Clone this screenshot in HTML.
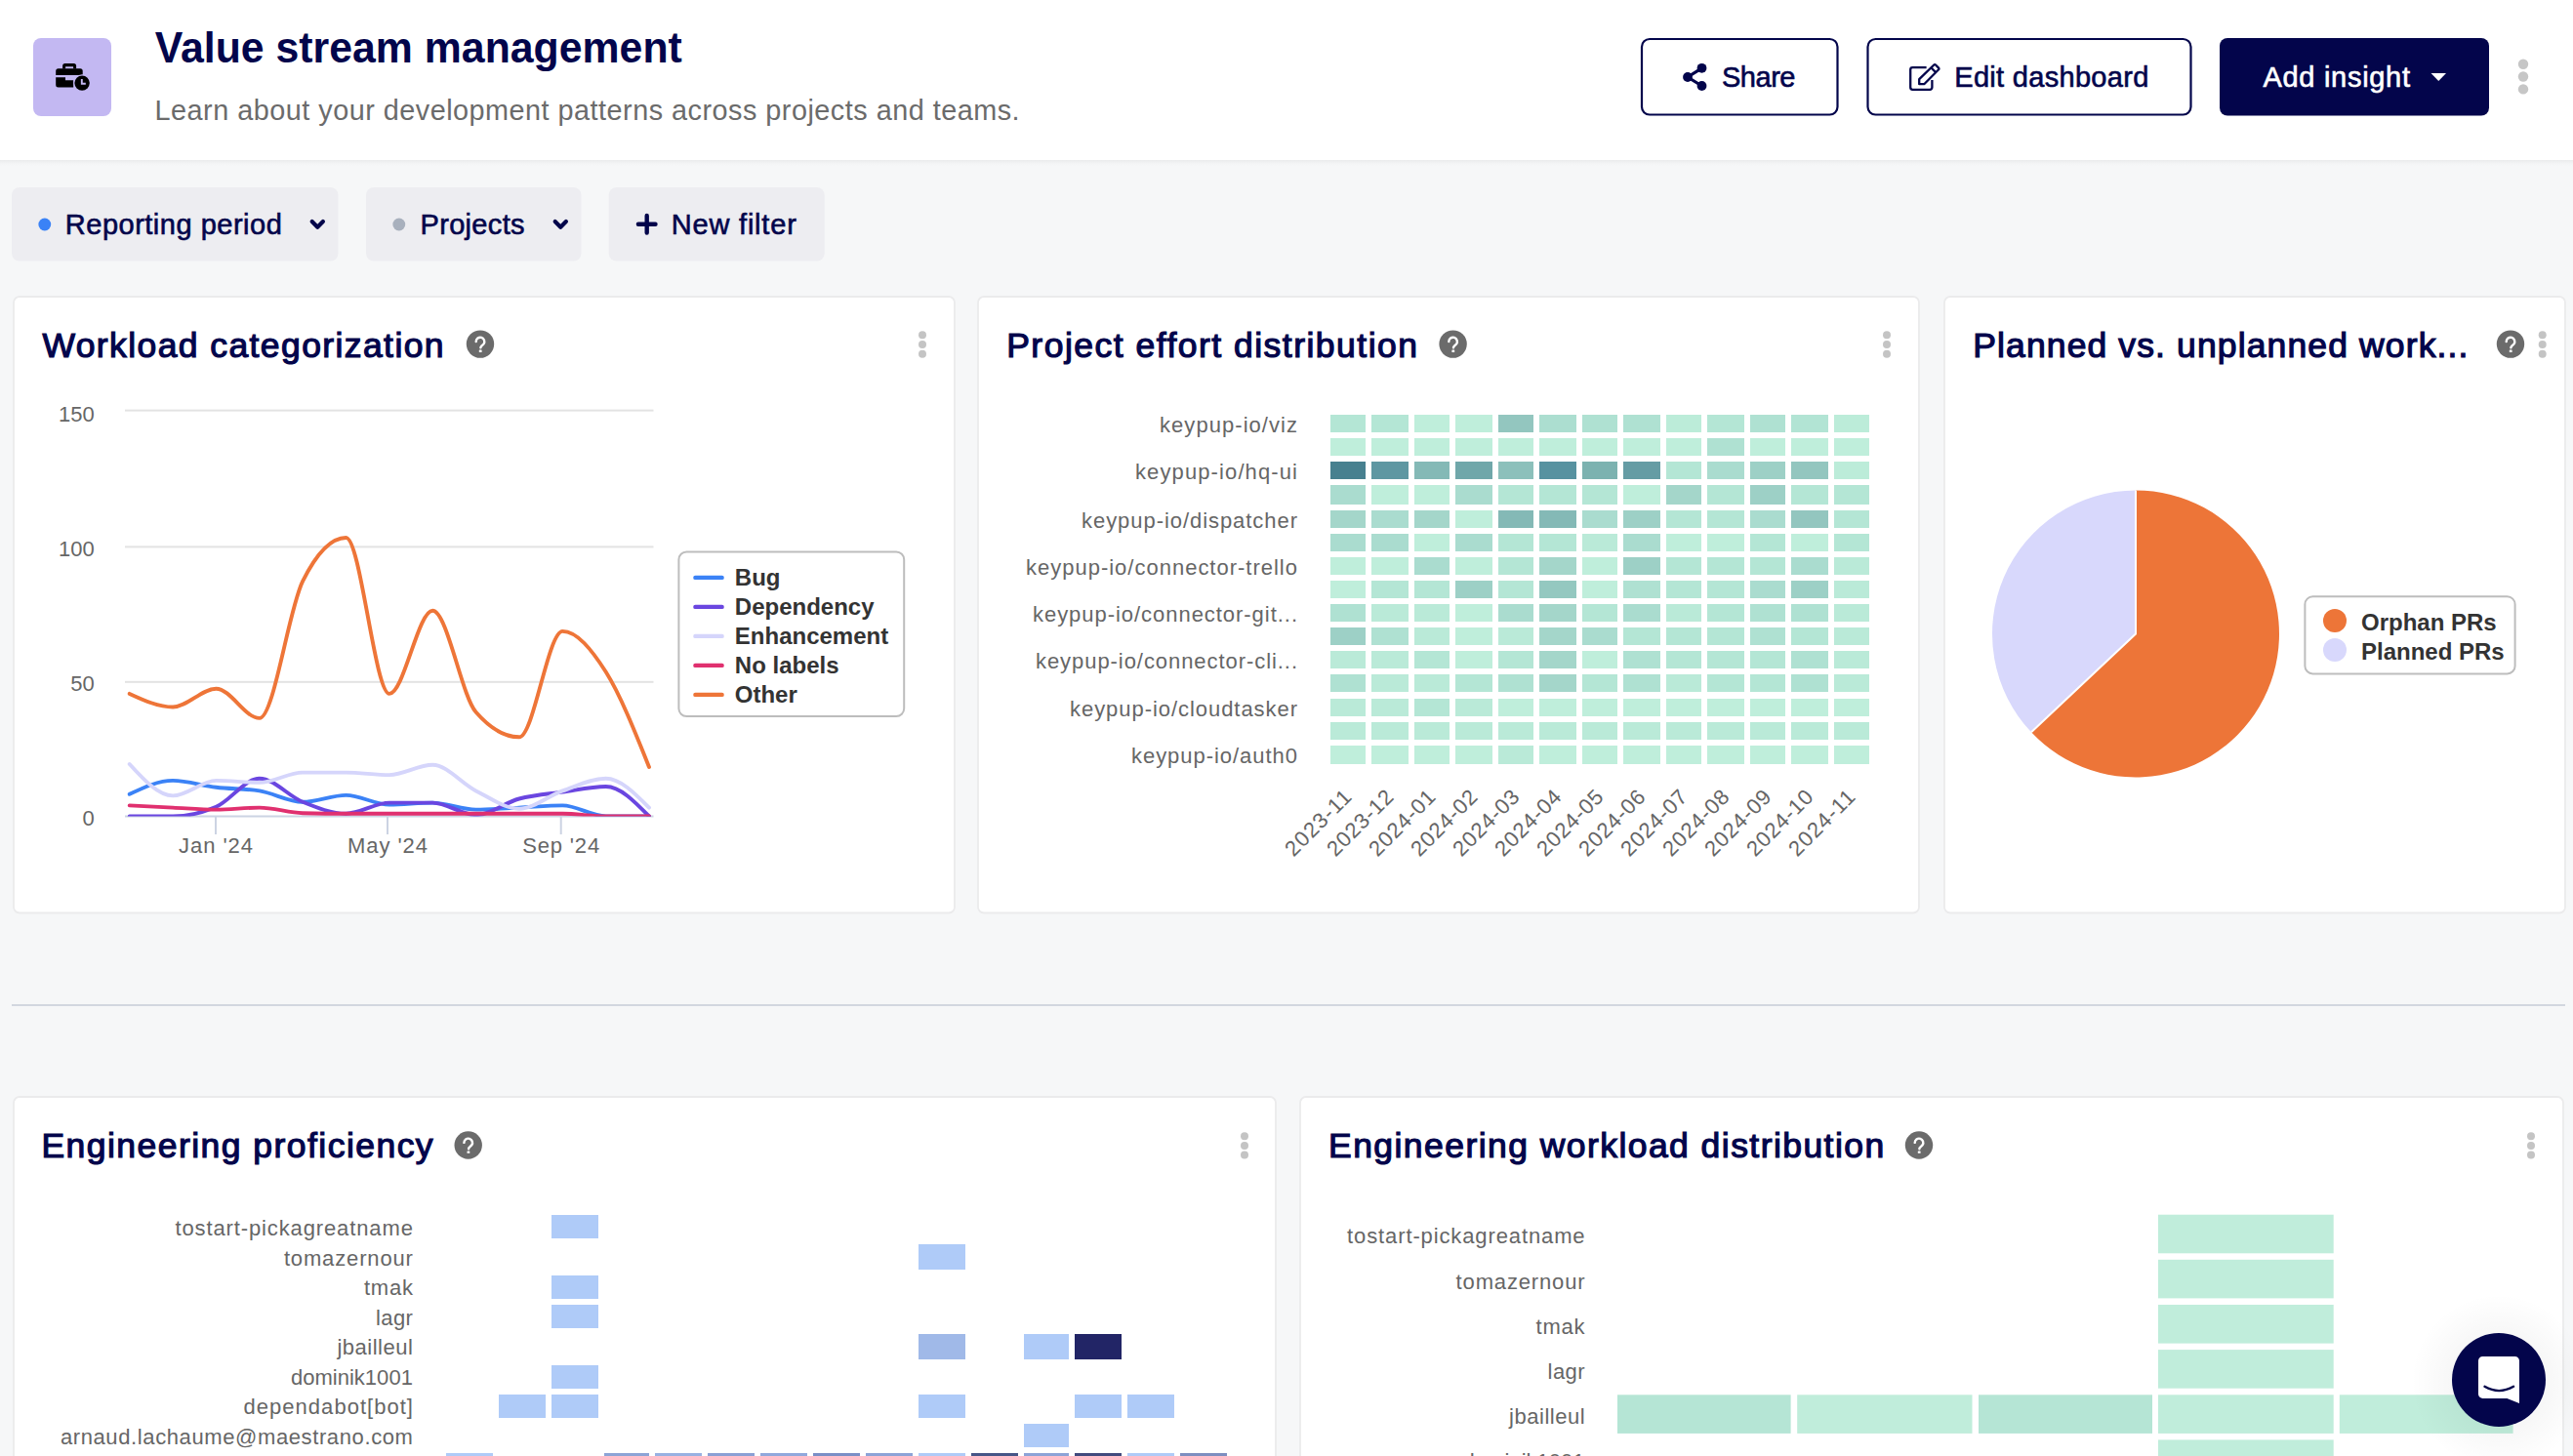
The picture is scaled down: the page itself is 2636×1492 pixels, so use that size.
<!DOCTYPE html>
<html><head><meta charset="utf-8"><title>Value stream management</title>
<style>
html,body{margin:0;padding:0;width:2636px;height:1492px;overflow:hidden;background:#f6f7f8;}
svg{display:block;font-family:"Liberation Sans", sans-serif;}
</style></head><body>
<svg width="2636" height="1492" viewBox="0 0 2636 1492">
<defs>
<linearGradient id="hsh" x1="0" y1="0" x2="0" y2="1">
<stop offset="0" stop-color="#e9eaeb"/><stop offset="1" stop-color="#f6f7f8" stop-opacity="0"/>
</linearGradient>
<radialGradient id="chatsh" cx="0.5" cy="0.5" r="0.5">
<stop offset="0.5" stop-color="#000" stop-opacity="0.035"/><stop offset="1" stop-color="#000" stop-opacity="0"/>
</radialGradient>
</defs>
<rect x="0" y="0" width="2636" height="1492" fill="#f6f7f8"/>

<rect x="0" y="164" width="2636" height="7" fill="url(#hsh)"/>
<rect x="0" y="0" width="2636" height="164" fill="#ffffff"/>
<rect x="34" y="39" width="80" height="80" rx="8" fill="#c3b8f2"/>
<g fill="#000"><path d="M66.6,65 h9 a2.5,2.5 0 0 1 2.5,2.5 v3 h-3 v-2.2 h-8 v2.2 h-3 v-3 a2.5,2.5 0 0 1 2.5,-2.5z"/><path d="M59.7,70.2 h22.5 a2.5,2.5 0 0 1 2.5,2.5 v4.3 h-27.5 v-4.3 a2.5,2.5 0 0 1 2.5,-2.5z"/><path d="M57.2,79.2 h9.8 v3.1 h8.2 v7.1 h-15.5 a2.5,2.5 0 0 1 -2.5,-2.5z"/></g><circle cx="84.1" cy="85.1" r="8.9" fill="#c3b8f2"/><circle cx="84.1" cy="85.1" r="7.7" fill="#000"/><path d="M83.8,81 v4.7 h4" stroke="#c3b8f2" stroke-width="1.9" fill="none"/>
<text x="158.8" y="64.3" font-size="44.8" font-weight="bold" fill="#03054b" textLength="540" lengthAdjust="spacingAndGlyphs">Value stream management</text>
<text x="158.6" y="122.8" font-size="28.8" fill="#6b6b6b" textLength="886" lengthAdjust="spacing">Learn about your development patterns across projects and teams.</text>
<rect x="1682" y="40" width="200.5" height="77.5" rx="8" fill="#fff" stroke="#03054b" stroke-width="2.2"/>
<g fill="#03054b" stroke="#03054b"><circle cx="1743.5" cy="69.8" r="4.9" stroke="none"/><circle cx="1729" cy="79" r="4.9" stroke="none"/><circle cx="1743.5" cy="88" r="4.9" stroke="none"/><path d="M1743.5,69.8 L1729,79 L1743.5,88" stroke-width="3.2" fill="none"/></g>
<text x="1764" y="88.7" font-size="29" stroke="#03054b" stroke-width="0.6" fill="#03054b" textLength="75.5" lengthAdjust="spacing">Share</text>
<rect x="1913.5" y="40" width="331" height="77.5" rx="8" fill="#fff" stroke="#03054b" stroke-width="2.2"/>
<g fill="none" stroke="#03054b" stroke-width="2.3" stroke-linejoin="round" stroke-linecap="butt"><path d="M1973.6,69.1 h-14.2 a2.2,2.2 0 0 0 -2.2,2.2 v18.3 a2.2,2.2 0 0 0 2.2,2.2 h17.8 a2.2,2.2 0 0 0 2.2,-2.2 v-7.6"/><path d="M1966.2,86.2 v-5.1 l15.1,-14.6 a1.2,1.2 0 0 1 1.7,0 l3.1,3.1 a1.2,1.2 0 0 1 0,1.7 l-14.6,14.7 z"/><path d="M1978.4,69.4 l4.6,4.6"/></g>
<text x="2002.3" y="88.7" font-size="29" stroke="#03054b" stroke-width="0.6" fill="#03054b" textLength="199" lengthAdjust="spacing">Edit dashboard</text>
<rect x="2274" y="39" width="276" height="79.5" rx="8" fill="#03054b"/>
<text x="2318.5" y="88.7" font-size="29" stroke="#fff" stroke-width="0.6" fill="#fff" textLength="150.5" lengthAdjust="spacing">Add insight</text>
<path d="M2490.5,75 h15.5 l-7.75,8z" fill="#fff"/>
<circle cx="2585" cy="65.8" r="5.2" fill="#c6c6c6"/>
<circle cx="2585" cy="78.5" r="5.2" fill="#c6c6c6"/>
<circle cx="2585" cy="91.4" r="5.2" fill="#c6c6c6"/>
<rect x="12" y="192" width="334.5" height="75.5" rx="8" fill="#ededf1"/>
<circle cx="45.8" cy="230" r="6.4" fill="#3a82f6"/>
<text x="66.8" y="239.6" font-size="29" stroke="#03054b" stroke-width="0.6" fill="#03054b" textLength="222" lengthAdjust="spacing">Reporting period</text>
<path d="M319.7,227.1 l5.6,5.6 l5.6,-5.6" fill="none" stroke="#03054b" stroke-width="4.2" stroke-linecap="round" stroke-linejoin="round"/>
<rect x="375" y="192" width="220.5" height="75.5" rx="8" fill="#ededf1"/>
<circle cx="408.8" cy="230" r="6.4" fill="#a8b0bd"/>
<text x="430.5" y="239.6" font-size="29" stroke="#03054b" stroke-width="0.6" fill="#03054b" textLength="107" lengthAdjust="spacing">Projects</text>
<path d="M568.6999999999999,227.1 l5.6,5.6 l5.6,-5.6" fill="none" stroke="#03054b" stroke-width="4.2" stroke-linecap="round" stroke-linejoin="round"/>
<rect x="623.7" y="192" width="221" height="75.5" rx="8" fill="#ededf1"/>
<path d="M662.7,221 v17.6 M653.9,229.8 h17.6" stroke="#03054b" stroke-width="4.4" stroke-linecap="round"/>
<text x="687.8" y="239.6" font-size="29" stroke="#03054b" stroke-width="0.6" fill="#03054b" textLength="128" lengthAdjust="spacing">New filter</text>
<rect x="14" y="304" width="964" height="631.5" rx="6" fill="#fff" stroke="#ebebec" stroke-width="1.8"/>
<rect x="1002" y="304" width="964" height="631.5" rx="6" fill="#fff" stroke="#ebebec" stroke-width="1.8"/>
<rect x="1992" y="304" width="636" height="631.5" rx="6" fill="#fff" stroke="#ebebec" stroke-width="1.8"/>
<text x="43.4" y="366.2" font-size="35.5" stroke="#03054b" stroke-width="1.2" fill="#03054b" textLength="411.2" lengthAdjust="spacing">Workload categorization</text>
<circle cx="492" cy="352.6" r="14.2" fill="#6b6b6b"/>
<g transform="translate(492,352.6)"><path d="M-4.3,-2.6 a4.3,4.3 0 1 1 7.9,2.4 c-0.9,1.2 -2.4,2 -2.9,2.9 q-0.3,0.5 -0.3,1" fill="none" stroke="#fff" stroke-width="2.4" stroke-linecap="round"/><rect x="-1.2" y="6.0" width="2.8" height="2.3" rx="0.5" fill="#fff"/></g>
<circle cx="945" cy="343.35" r="4" fill="#c4c4c4"/>
<circle cx="945" cy="353.00" r="4" fill="#c4c4c4"/>
<circle cx="945" cy="362.65" r="4" fill="#c4c4c4"/>
<text x="1031.2" y="366.2" font-size="35.5" stroke="#03054b" stroke-width="1.2" fill="#03054b" textLength="420.8" lengthAdjust="spacing">Project effort distribution</text>
<circle cx="1488.6" cy="352.6" r="14.2" fill="#6b6b6b"/>
<g transform="translate(1488.6,352.6)"><path d="M-4.3,-2.6 a4.3,4.3 0 1 1 7.9,2.4 c-0.9,1.2 -2.4,2 -2.9,2.9 q-0.3,0.5 -0.3,1" fill="none" stroke="#fff" stroke-width="2.4" stroke-linecap="round"/><rect x="-1.2" y="6.0" width="2.8" height="2.3" rx="0.5" fill="#fff"/></g>
<circle cx="1933" cy="343.35" r="4" fill="#c4c4c4"/>
<circle cx="1933" cy="353.00" r="4" fill="#c4c4c4"/>
<circle cx="1933" cy="362.65" r="4" fill="#c4c4c4"/>
<text x="2021.2" y="366.2" font-size="35.5" stroke="#03054b" stroke-width="1.2" fill="#03054b" textLength="507.2" lengthAdjust="spacing">Planned vs. unplanned work...</text>
<circle cx="2572" cy="352.6" r="14.2" fill="#6b6b6b"/>
<g transform="translate(2572,352.6)"><path d="M-4.3,-2.6 a4.3,4.3 0 1 1 7.9,2.4 c-0.9,1.2 -2.4,2 -2.9,2.9 q-0.3,0.5 -0.3,1" fill="none" stroke="#fff" stroke-width="2.4" stroke-linecap="round"/><rect x="-1.2" y="6.0" width="2.8" height="2.3" rx="0.5" fill="#fff"/></g>
<circle cx="2604.7" cy="343.35" r="4" fill="#c4c4c4"/>
<circle cx="2604.7" cy="353.00" r="4" fill="#c4c4c4"/>
<circle cx="2604.7" cy="362.65" r="4" fill="#c4c4c4"/>
<rect x="12" y="1029" width="2616" height="2" fill="#d2d7df"/>
<rect x="14" y="1124" width="1293" height="475" rx="6" fill="#fff" stroke="#ebebec" stroke-width="1.8"/>
<rect x="1332" y="1124" width="1294" height="475" rx="6" fill="#fff" stroke="#ebebec" stroke-width="1.8"/>
<text x="42.4" y="1185.5" font-size="35.5" stroke="#03054b" stroke-width="1.2" fill="#03054b" textLength="401.2" lengthAdjust="spacing">Engineering proficiency</text>
<circle cx="479.7" cy="1173.5" r="14.2" fill="#6b6b6b"/>
<g transform="translate(479.7,1173.5)"><path d="M-4.3,-2.6 a4.3,4.3 0 1 1 7.9,2.4 c-0.9,1.2 -2.4,2 -2.9,2.9 q-0.3,0.5 -0.3,1" fill="none" stroke="#fff" stroke-width="2.4" stroke-linecap="round"/><rect x="-1.2" y="6.0" width="2.8" height="2.3" rx="0.5" fill="#fff"/></g>
<circle cx="1275" cy="1164.25" r="4" fill="#c4c4c4"/>
<circle cx="1275" cy="1173.90" r="4" fill="#c4c4c4"/>
<circle cx="1275" cy="1183.55" r="4" fill="#c4c4c4"/>
<text x="1361.0" y="1185.5" font-size="35.5" stroke="#03054b" stroke-width="1.2" fill="#03054b" textLength="569.2" lengthAdjust="spacing">Engineering workload distribution</text>
<circle cx="1966" cy="1173.5" r="14.2" fill="#6b6b6b"/>
<g transform="translate(1966,1173.5)"><path d="M-4.3,-2.6 a4.3,4.3 0 1 1 7.9,2.4 c-0.9,1.2 -2.4,2 -2.9,2.9 q-0.3,0.5 -0.3,1" fill="none" stroke="#fff" stroke-width="2.4" stroke-linecap="round"/><rect x="-1.2" y="6.0" width="2.8" height="2.3" rx="0.5" fill="#fff"/></g>
<circle cx="2593" cy="1164.25" r="4" fill="#c4c4c4"/>
<circle cx="2593" cy="1173.90" r="4" fill="#c4c4c4"/>
<circle cx="2593" cy="1183.55" r="4" fill="#c4c4c4"/>
<rect x="128" y="419.6" width="541.5" height="2" fill="#e3e3e3"/>
<rect x="128" y="559.4" width="541.5" height="2" fill="#e3e3e3"/>
<rect x="128" y="697.8" width="541.5" height="2" fill="#e3e3e3"/>
<text x="96.7" y="432.1" font-size="22" fill="#666666" text-anchor="end">150</text>
<text x="96.7" y="569.9" font-size="22" fill="#666666" text-anchor="end">100</text>
<text x="96.7" y="708.3" font-size="22" fill="#666666" text-anchor="end">50</text>
<text x="96.7" y="846.0" font-size="22" fill="#666666" text-anchor="end">0</text>
<rect x="128" y="835.5" width="541.5" height="2" fill="#ccd3e3"/>
<rect x="220" y="836.5" width="2" height="18.5" fill="#ccd3e3"/>
<rect x="396" y="836.5" width="2" height="18.5" fill="#ccd3e3"/>
<rect x="573.7" y="836.5" width="2" height="18.5" fill="#ccd3e3"/>
<text x="183.0" y="874" font-size="22" fill="#666666" textLength="76" lengthAdjust="spacing">Jan '24</text>
<text x="356.0" y="874" font-size="22" fill="#666666" textLength="82" lengthAdjust="spacing">May '24</text>
<text x="535.2" y="874" font-size="22" fill="#666666" textLength="79" lengthAdjust="spacing">Sep '24</text>
<clipPath id="plotclip"><rect x="110" y="380" width="580" height="456.5"/></clipPath><g clip-path="url(#plotclip)">
<path d="M132.7,813.8C147.5,806.8 162.3,799.9 177.1,799.9C191.8,799.9 206.6,805.1 221.4,806.8C236.2,808.6 251.0,808.0 265.8,810.4C280.6,812.8 295.4,821.8 310.1,821.8C324.9,821.8 339.7,814.9 354.5,814.9C369.3,814.9 384.1,824.6 398.9,824.6C413.6,824.6 428.4,822.6 443.2,822.6C458.0,822.6 472.8,829.6 487.6,829.6C502.4,829.6 517.2,828.3 531.9,827.6C546.7,826.9 561.5,825.4 576.3,825.4C591.1,825.4 605.9,836.5 620.7,836.5C635.4,836.5 650.2,836.5 665.0,836.5" fill="none" stroke="#3b82f6" stroke-width="3.9" stroke-linejoin="round" stroke-linecap="round"/>
<path d="M132.7,836.5C147.5,836.5 162.3,836.5 177.1,836.5C191.8,836.5 206.6,833.3 221.4,826.8C236.2,820.3 251.0,797.7 265.8,797.7C280.6,797.7 295.4,815.8 310.1,821.8C324.9,827.8 339.7,833.7 354.5,833.7C369.3,833.7 384.1,822.6 398.9,822.6C413.6,822.6 428.4,822.6 443.2,822.6C458.0,822.6 472.8,835.1 487.6,835.1C502.4,835.1 517.2,822.4 531.9,818.5C546.7,814.6 561.5,813.6 576.3,811.6C591.1,809.5 605.9,806.0 620.7,806.0C635.4,806.0 650.2,821.3 665.0,836.5" fill="none" stroke="#6a46e0" stroke-width="3.9" stroke-linejoin="round" stroke-linecap="round"/>
<path d="M132.7,783.0C147.5,799.2 162.3,815.4 177.1,815.4C191.8,815.4 206.6,799.9 221.4,799.9C236.2,799.9 251.0,801.9 265.8,801.9C280.6,801.9 295.4,791.6 310.1,791.6C324.9,791.6 339.7,791.6 354.5,791.6C369.3,791.6 384.1,794.1 398.9,794.1C413.6,794.1 428.4,783.8 443.2,783.8C458.0,783.8 472.8,803.0 487.6,810.4C502.4,817.9 517.2,828.7 531.9,828.7C546.7,828.7 561.5,815.6 576.3,810.4C591.1,805.3 605.9,797.7 620.7,797.7C635.4,797.7 650.2,812.7 665.0,827.6" fill="none" stroke="#d5d5fb" stroke-width="3.9" stroke-linejoin="round" stroke-linecap="round"/>
<path d="M132.7,825.4C147.5,826.2 162.3,826.9 177.1,827.6C191.8,828.3 206.6,829.6 221.4,829.6C236.2,829.6 251.0,827.6 265.8,827.6C280.6,827.6 295.4,832.8 310.1,833.2C324.9,833.5 339.7,833.7 354.5,833.7C369.3,833.7 384.1,833.7 398.9,833.7C413.6,833.7 428.4,833.7 443.2,833.7C458.0,833.7 472.8,833.7 487.6,833.7C502.4,833.7 517.2,833.7 531.9,833.7C546.7,833.7 561.5,833.7 576.3,833.7C591.1,833.7 605.9,836.5 620.7,836.5C635.4,836.5 650.2,836.5 665.0,836.5" fill="none" stroke="#e0306f" stroke-width="3.9" stroke-linejoin="round" stroke-linecap="round"/>
<path d="M132.7,710.9C147.5,717.7 162.3,724.5 177.1,724.5C191.8,724.5 206.6,705.7 221.4,705.7C236.2,705.7 251.0,735.9 265.8,735.9C280.6,735.9 295.4,625.4 310.1,595.6C324.9,565.9 339.7,551.0 354.5,551.0C369.3,551.0 384.1,710.9 398.9,710.9C413.6,710.9 428.4,625.8 443.2,625.8C458.0,625.8 472.8,712.8 487.6,729.8C502.4,746.8 517.2,755.3 531.9,755.3C546.7,755.3 561.5,646.9 576.3,646.9C591.1,646.9 605.9,665.3 620.7,688.5C635.4,711.7 650.2,748.9 665.0,786.0" fill="none" stroke="#ee7538" stroke-width="3.9" stroke-linejoin="round" stroke-linecap="round"/>
</g>
<rect x="695.4" y="565.4" width="230.8" height="168.7" rx="8" fill="#fff" stroke="#bdbdbd" stroke-width="2"/>
<rect x="710.2" y="589.6999999999999" width="31.6" height="4.4" rx="2.2" fill="#3b82f6"/>
<text x="752.8" y="600.1" font-size="24" font-weight="bold" fill="#333">Bug</text>
<rect x="710.2" y="619.6999999999999" width="31.6" height="4.4" rx="2.2" fill="#6a46e0"/>
<text x="752.8" y="630.1" font-size="24" font-weight="bold" fill="#333">Dependency</text>
<rect x="710.2" y="649.6999999999999" width="31.6" height="4.4" rx="2.2" fill="#d5d5fb"/>
<text x="752.8" y="660.1" font-size="24" font-weight="bold" fill="#333">Enhancement</text>
<rect x="710.2" y="679.6999999999999" width="31.6" height="4.4" rx="2.2" fill="#e0306f"/>
<text x="752.8" y="690.1" font-size="24" font-weight="bold" fill="#333">No labels</text>
<rect x="710.2" y="709.6999999999999" width="31.6" height="4.4" rx="2.2" fill="#ee7538"/>
<text x="752.8" y="720.1" font-size="24" font-weight="bold" fill="#333">Other</text>
<rect x="1363" y="425" width="36" height="18" fill="#b4e6d5"/>
<rect x="1405" y="425" width="38" height="18" fill="#b4e6d5"/>
<rect x="1449" y="425" width="36" height="18" fill="#bfeedb"/>
<rect x="1491" y="425" width="38" height="18" fill="#bfeedb"/>
<rect x="1535" y="425" width="36" height="18" fill="#93c6bf"/>
<rect x="1577" y="425" width="38" height="18" fill="#acded0"/>
<rect x="1621" y="425" width="36" height="18" fill="#afe1d2"/>
<rect x="1663" y="425" width="38" height="18" fill="#afe1d2"/>
<rect x="1707" y="425" width="36" height="18" fill="#bcecd9"/>
<rect x="1749" y="425" width="38" height="18" fill="#b4e6d5"/>
<rect x="1793" y="425" width="36" height="18" fill="#afe1d2"/>
<rect x="1835" y="425" width="38" height="18" fill="#b2e4d4"/>
<rect x="1879" y="425" width="36" height="18" fill="#bcecd9"/>
<rect x="1363" y="449" width="36" height="18" fill="#bfeedb"/>
<rect x="1405" y="449" width="38" height="18" fill="#bfeedb"/>
<rect x="1449" y="449" width="36" height="18" fill="#bfeedb"/>
<rect x="1491" y="449" width="38" height="18" fill="#bfeedb"/>
<rect x="1535" y="449" width="36" height="18" fill="#bfeedb"/>
<rect x="1577" y="449" width="38" height="18" fill="#bfeedb"/>
<rect x="1621" y="449" width="36" height="18" fill="#bfeedb"/>
<rect x="1663" y="449" width="38" height="18" fill="#bfeedb"/>
<rect x="1707" y="449" width="36" height="18" fill="#bfeedb"/>
<rect x="1749" y="449" width="38" height="18" fill="#afe1d2"/>
<rect x="1793" y="449" width="36" height="18" fill="#bfeedb"/>
<rect x="1835" y="449" width="38" height="18" fill="#bfeedb"/>
<rect x="1879" y="449" width="36" height="18" fill="#bfeedb"/>
<rect x="1363" y="473" width="36" height="18" fill="#47808f"/>
<rect x="1405" y="473" width="38" height="18" fill="#5e97a2"/>
<rect x="1449" y="473" width="36" height="18" fill="#84b9b6"/>
<rect x="1491" y="473" width="38" height="18" fill="#70a7aa"/>
<rect x="1535" y="473" width="36" height="18" fill="#8cc0bb"/>
<rect x="1577" y="473" width="38" height="18" fill="#5792a0"/>
<rect x="1621" y="473" width="36" height="18" fill="#7cb2b0"/>
<rect x="1663" y="473" width="38" height="18" fill="#659ca4"/>
<rect x="1707" y="473" width="36" height="18" fill="#b4e6d5"/>
<rect x="1749" y="473" width="38" height="18" fill="#aadccf"/>
<rect x="1793" y="473" width="36" height="18" fill="#9dd0c6"/>
<rect x="1835" y="473" width="38" height="18" fill="#93c6bf"/>
<rect x="1879" y="473" width="36" height="18" fill="#bcecd9"/>
<rect x="1363" y="497" width="36" height="20" fill="#aadccf"/>
<rect x="1405" y="497" width="38" height="20" fill="#bfeedb"/>
<rect x="1449" y="497" width="36" height="20" fill="#bfeedb"/>
<rect x="1491" y="497" width="38" height="20" fill="#aadccf"/>
<rect x="1535" y="497" width="36" height="20" fill="#b4e6d5"/>
<rect x="1577" y="497" width="38" height="20" fill="#b4e6d5"/>
<rect x="1621" y="497" width="36" height="20" fill="#b4e6d5"/>
<rect x="1663" y="497" width="38" height="20" fill="#bfeedb"/>
<rect x="1707" y="497" width="36" height="20" fill="#a4d6ca"/>
<rect x="1749" y="497" width="38" height="20" fill="#b4e6d5"/>
<rect x="1793" y="497" width="36" height="20" fill="#9dd0c6"/>
<rect x="1835" y="497" width="38" height="20" fill="#b4e6d5"/>
<rect x="1879" y="497" width="36" height="20" fill="#b4e6d5"/>
<rect x="1363" y="523" width="36" height="18" fill="#a4d6ca"/>
<rect x="1405" y="523" width="38" height="18" fill="#aadccf"/>
<rect x="1449" y="523" width="36" height="18" fill="#a4d6ca"/>
<rect x="1491" y="523" width="38" height="18" fill="#bfeedb"/>
<rect x="1535" y="523" width="36" height="18" fill="#84b9b6"/>
<rect x="1577" y="523" width="38" height="18" fill="#84b9b6"/>
<rect x="1621" y="523" width="36" height="18" fill="#aadccf"/>
<rect x="1663" y="523" width="38" height="18" fill="#9dd0c6"/>
<rect x="1707" y="523" width="36" height="18" fill="#b4e6d5"/>
<rect x="1749" y="523" width="38" height="18" fill="#b4e6d5"/>
<rect x="1793" y="523" width="36" height="18" fill="#aadccf"/>
<rect x="1835" y="523" width="38" height="18" fill="#93c6bf"/>
<rect x="1879" y="523" width="36" height="18" fill="#b4e6d5"/>
<rect x="1363" y="547" width="36" height="18" fill="#aadccf"/>
<rect x="1405" y="547" width="38" height="18" fill="#aadccf"/>
<rect x="1449" y="547" width="36" height="18" fill="#bfeedb"/>
<rect x="1491" y="547" width="38" height="18" fill="#aadccf"/>
<rect x="1535" y="547" width="36" height="18" fill="#b4e6d5"/>
<rect x="1577" y="547" width="38" height="18" fill="#b4e6d5"/>
<rect x="1621" y="547" width="36" height="18" fill="#baead8"/>
<rect x="1663" y="547" width="38" height="18" fill="#aadccf"/>
<rect x="1707" y="547" width="36" height="18" fill="#bfeedb"/>
<rect x="1749" y="547" width="38" height="18" fill="#bfeedb"/>
<rect x="1793" y="547" width="36" height="18" fill="#b4e6d5"/>
<rect x="1835" y="547" width="38" height="18" fill="#bfeedb"/>
<rect x="1879" y="547" width="36" height="18" fill="#b4e6d5"/>
<rect x="1363" y="571" width="36" height="18" fill="#bfeedb"/>
<rect x="1405" y="571" width="38" height="18" fill="#bfeedb"/>
<rect x="1449" y="571" width="36" height="18" fill="#aadccf"/>
<rect x="1491" y="571" width="38" height="18" fill="#bfeedb"/>
<rect x="1535" y="571" width="36" height="18" fill="#b4e6d5"/>
<rect x="1577" y="571" width="38" height="18" fill="#a4d6ca"/>
<rect x="1621" y="571" width="36" height="18" fill="#bfeedb"/>
<rect x="1663" y="571" width="38" height="18" fill="#9dd0c6"/>
<rect x="1707" y="571" width="36" height="18" fill="#b4e6d5"/>
<rect x="1749" y="571" width="38" height="18" fill="#b4e6d5"/>
<rect x="1793" y="571" width="36" height="18" fill="#b4e6d5"/>
<rect x="1835" y="571" width="38" height="18" fill="#aadccf"/>
<rect x="1879" y="571" width="36" height="18" fill="#baead8"/>
<rect x="1363" y="595" width="36" height="18" fill="#bfeedb"/>
<rect x="1405" y="595" width="38" height="18" fill="#b4e6d5"/>
<rect x="1449" y="595" width="36" height="18" fill="#b4e6d5"/>
<rect x="1491" y="595" width="38" height="18" fill="#9dd0c6"/>
<rect x="1535" y="595" width="36" height="18" fill="#b4e6d5"/>
<rect x="1577" y="595" width="38" height="18" fill="#94c8c0"/>
<rect x="1621" y="595" width="36" height="18" fill="#bfeedb"/>
<rect x="1663" y="595" width="38" height="18" fill="#afe1d2"/>
<rect x="1707" y="595" width="36" height="18" fill="#b4e6d5"/>
<rect x="1749" y="595" width="38" height="18" fill="#b4e6d5"/>
<rect x="1793" y="595" width="36" height="18" fill="#aadccf"/>
<rect x="1835" y="595" width="38" height="18" fill="#9dd0c6"/>
<rect x="1879" y="595" width="36" height="18" fill="#baead8"/>
<rect x="1363" y="619" width="36" height="18" fill="#afe1d2"/>
<rect x="1405" y="619" width="38" height="18" fill="#baead8"/>
<rect x="1449" y="619" width="36" height="18" fill="#baead8"/>
<rect x="1491" y="619" width="38" height="18" fill="#bfeedb"/>
<rect x="1535" y="619" width="36" height="18" fill="#aadccf"/>
<rect x="1577" y="619" width="38" height="18" fill="#a4d6ca"/>
<rect x="1621" y="619" width="36" height="18" fill="#b4e6d5"/>
<rect x="1663" y="619" width="38" height="18" fill="#aadccf"/>
<rect x="1707" y="619" width="36" height="18" fill="#baead8"/>
<rect x="1749" y="619" width="38" height="18" fill="#b4e6d5"/>
<rect x="1793" y="619" width="36" height="18" fill="#afe1d2"/>
<rect x="1835" y="619" width="38" height="18" fill="#afe1d2"/>
<rect x="1879" y="619" width="36" height="18" fill="#baead8"/>
<rect x="1363" y="643" width="36" height="18" fill="#9dd0c6"/>
<rect x="1405" y="643" width="38" height="18" fill="#afe1d2"/>
<rect x="1449" y="643" width="36" height="18" fill="#baead8"/>
<rect x="1491" y="643" width="38" height="18" fill="#bfeedb"/>
<rect x="1535" y="643" width="36" height="18" fill="#baead8"/>
<rect x="1577" y="643" width="38" height="18" fill="#a4d6ca"/>
<rect x="1621" y="643" width="36" height="18" fill="#aadccf"/>
<rect x="1663" y="643" width="38" height="18" fill="#b4e6d5"/>
<rect x="1707" y="643" width="36" height="18" fill="#b4e6d5"/>
<rect x="1749" y="643" width="38" height="18" fill="#b4e6d5"/>
<rect x="1793" y="643" width="36" height="18" fill="#afe1d2"/>
<rect x="1835" y="643" width="38" height="18" fill="#b4e6d5"/>
<rect x="1879" y="643" width="36" height="18" fill="#baead8"/>
<rect x="1363" y="667" width="36" height="18" fill="#baead8"/>
<rect x="1405" y="667" width="38" height="18" fill="#baead8"/>
<rect x="1449" y="667" width="36" height="18" fill="#b4e6d5"/>
<rect x="1491" y="667" width="38" height="18" fill="#bfeedb"/>
<rect x="1535" y="667" width="36" height="18" fill="#b4e6d5"/>
<rect x="1577" y="667" width="38" height="18" fill="#a4d6ca"/>
<rect x="1621" y="667" width="36" height="18" fill="#bfeedb"/>
<rect x="1663" y="667" width="38" height="18" fill="#afe1d2"/>
<rect x="1707" y="667" width="36" height="18" fill="#b4e6d5"/>
<rect x="1749" y="667" width="38" height="18" fill="#b4e6d5"/>
<rect x="1793" y="667" width="36" height="18" fill="#b4e6d5"/>
<rect x="1835" y="667" width="38" height="18" fill="#afe1d2"/>
<rect x="1879" y="667" width="36" height="18" fill="#baead8"/>
<rect x="1363" y="691" width="36" height="18" fill="#afe1d2"/>
<rect x="1405" y="691" width="38" height="18" fill="#baead8"/>
<rect x="1449" y="691" width="36" height="18" fill="#baead8"/>
<rect x="1491" y="691" width="38" height="18" fill="#b4e6d5"/>
<rect x="1535" y="691" width="36" height="18" fill="#afe1d2"/>
<rect x="1577" y="691" width="38" height="18" fill="#a4d6ca"/>
<rect x="1621" y="691" width="36" height="18" fill="#b4e6d5"/>
<rect x="1663" y="691" width="38" height="18" fill="#afe1d2"/>
<rect x="1707" y="691" width="36" height="18" fill="#baead8"/>
<rect x="1749" y="691" width="38" height="18" fill="#b4e6d5"/>
<rect x="1793" y="691" width="36" height="18" fill="#b4e6d5"/>
<rect x="1835" y="691" width="38" height="18" fill="#afe1d2"/>
<rect x="1879" y="691" width="36" height="18" fill="#baead8"/>
<rect x="1363" y="716" width="36" height="18" fill="#baead8"/>
<rect x="1405" y="716" width="38" height="18" fill="#baead8"/>
<rect x="1449" y="716" width="36" height="18" fill="#b4e6d5"/>
<rect x="1491" y="716" width="38" height="18" fill="#baead8"/>
<rect x="1535" y="716" width="36" height="18" fill="#bfeedb"/>
<rect x="1577" y="716" width="38" height="18" fill="#bfeedb"/>
<rect x="1621" y="716" width="36" height="18" fill="#bfeedb"/>
<rect x="1663" y="716" width="38" height="18" fill="#bfeedb"/>
<rect x="1707" y="716" width="36" height="18" fill="#bfeedb"/>
<rect x="1749" y="716" width="38" height="18" fill="#bfeedb"/>
<rect x="1793" y="716" width="36" height="18" fill="#bfeedb"/>
<rect x="1835" y="716" width="38" height="18" fill="#bfeedb"/>
<rect x="1879" y="716" width="36" height="18" fill="#bfeedb"/>
<rect x="1363" y="740" width="36" height="18" fill="#baead8"/>
<rect x="1405" y="740" width="38" height="18" fill="#baead8"/>
<rect x="1449" y="740" width="36" height="18" fill="#baead8"/>
<rect x="1491" y="740" width="38" height="18" fill="#baead8"/>
<rect x="1535" y="740" width="36" height="18" fill="#baead8"/>
<rect x="1577" y="740" width="38" height="18" fill="#baead8"/>
<rect x="1621" y="740" width="36" height="18" fill="#baead8"/>
<rect x="1663" y="740" width="38" height="18" fill="#baead8"/>
<rect x="1707" y="740" width="36" height="18" fill="#baead8"/>
<rect x="1749" y="740" width="38" height="18" fill="#baead8"/>
<rect x="1793" y="740" width="36" height="18" fill="#baead8"/>
<rect x="1835" y="740" width="38" height="18" fill="#baead8"/>
<rect x="1879" y="740" width="36" height="18" fill="#baead8"/>
<rect x="1363" y="764" width="36" height="19" fill="#bfeedb"/>
<rect x="1405" y="764" width="38" height="19" fill="#bfeedb"/>
<rect x="1449" y="764" width="36" height="19" fill="#bfeedb"/>
<rect x="1491" y="764" width="38" height="19" fill="#bfeedb"/>
<rect x="1535" y="764" width="36" height="19" fill="#baead8"/>
<rect x="1577" y="764" width="38" height="19" fill="#bfeedb"/>
<rect x="1621" y="764" width="36" height="19" fill="#bfeedb"/>
<rect x="1663" y="764" width="38" height="19" fill="#bfeedb"/>
<rect x="1707" y="764" width="36" height="19" fill="#bfeedb"/>
<rect x="1749" y="764" width="38" height="19" fill="#bfeedb"/>
<rect x="1793" y="764" width="36" height="19" fill="#bfeedb"/>
<rect x="1835" y="764" width="38" height="19" fill="#bfeedb"/>
<rect x="1879" y="764" width="36" height="19" fill="#bfeedb"/>
<text x="1188" y="443.2" font-size="22" fill="#666666" textLength="141" lengthAdjust="spacing">keypup-io/viz</text>
<text x="1163" y="491.2" font-size="22" fill="#666666" textLength="166" lengthAdjust="spacing">keypup-io/hq-ui</text>
<text x="1108" y="541.2" font-size="22" fill="#666666" textLength="221" lengthAdjust="spacing">keypup-io/dispatcher</text>
<text x="1051" y="589.2" font-size="22" fill="#666666" textLength="278" lengthAdjust="spacing">keypup-io/connector-trello</text>
<text x="1058" y="637.2" font-size="22" fill="#666666" textLength="271" lengthAdjust="spacing">keypup-io/connector-git...</text>
<text x="1061" y="685.2" font-size="22" fill="#666666" textLength="268" lengthAdjust="spacing">keypup-io/connector-cli...</text>
<text x="1096" y="734.2" font-size="22" fill="#666666" textLength="233" lengthAdjust="spacing">keypup-io/cloudtasker</text>
<text x="1159" y="782.2" font-size="22" fill="#666666" textLength="170" lengthAdjust="spacing">keypup-io/auth0</text>
<text transform="translate(1386.0,818) rotate(-45)" font-size="22" fill="#666666" text-anchor="end" textLength="86" lengthAdjust="spacing">2023-11</text>
<text transform="translate(1429.0,818) rotate(-45)" font-size="22" fill="#666666" text-anchor="end" textLength="86" lengthAdjust="spacing">2023-12</text>
<text transform="translate(1472.0,818) rotate(-45)" font-size="22" fill="#666666" text-anchor="end" textLength="86" lengthAdjust="spacing">2024-01</text>
<text transform="translate(1515.0,818) rotate(-45)" font-size="22" fill="#666666" text-anchor="end" textLength="86" lengthAdjust="spacing">2024-02</text>
<text transform="translate(1558.0,818) rotate(-45)" font-size="22" fill="#666666" text-anchor="end" textLength="86" lengthAdjust="spacing">2024-03</text>
<text transform="translate(1601.0,818) rotate(-45)" font-size="22" fill="#666666" text-anchor="end" textLength="86" lengthAdjust="spacing">2024-04</text>
<text transform="translate(1644.0,818) rotate(-45)" font-size="22" fill="#666666" text-anchor="end" textLength="86" lengthAdjust="spacing">2024-05</text>
<text transform="translate(1687.0,818) rotate(-45)" font-size="22" fill="#666666" text-anchor="end" textLength="86" lengthAdjust="spacing">2024-06</text>
<text transform="translate(1730.0,818) rotate(-45)" font-size="22" fill="#666666" text-anchor="end" textLength="86" lengthAdjust="spacing">2024-07</text>
<text transform="translate(1773.0,818) rotate(-45)" font-size="22" fill="#666666" text-anchor="end" textLength="86" lengthAdjust="spacing">2024-08</text>
<text transform="translate(1816.0,818) rotate(-45)" font-size="22" fill="#666666" text-anchor="end" textLength="86" lengthAdjust="spacing">2024-09</text>
<text transform="translate(1859.0,818) rotate(-45)" font-size="22" fill="#666666" text-anchor="end" textLength="86" lengthAdjust="spacing">2024-10</text>
<text transform="translate(1902.0,818) rotate(-45)" font-size="22" fill="#666666" text-anchor="end" textLength="86" lengthAdjust="spacing">2024-11</text>
<path d="M2188,649.5 L2188,502.5 A147,147 0 1 1 2081.02,750.32 Z" fill="#ed7538"/>
<path d="M2188,649.5 L2081.02,750.32 A147,147 0 0 1 2188,502.5 Z" fill="#d8d8fc"/>
<path d="M2188,502.5 L2188,649.5 L2081.02,750.32" fill="none" stroke="#fff" stroke-width="2"/>
<rect x="2361.4" y="611.3" width="215.2" height="79.1" rx="8" fill="#fff" stroke="#bdbdbd" stroke-width="2"/>
<circle cx="2392" cy="636" r="12" fill="#ed7538"/>
<circle cx="2392" cy="666" r="12" fill="#d8d8fc"/>
<text x="2419" y="645.5" font-size="24" font-weight="bold" fill="#333">Orphan PRs</text>
<text x="2419" y="675.7" font-size="24" font-weight="bold" fill="#333">Planned PRs</text>
<text x="179.4" y="1266.0" font-size="22" fill="#666666" textLength="243.5" lengthAdjust="spacing">tostart-pickagreatname</text>
<text x="290.9" y="1296.5" font-size="22" fill="#666666" textLength="132" lengthAdjust="spacing">tomazernour</text>
<text x="372.9" y="1327.0" font-size="22" fill="#666666" textLength="50" lengthAdjust="spacing">tmak</text>
<text x="384.9" y="1357.5" font-size="22" fill="#666666" textLength="38" lengthAdjust="spacing">lagr</text>
<text x="345.4" y="1388.0" font-size="22" fill="#666666" textLength="77.5" lengthAdjust="spacing">jbailleul</text>
<text x="297.9" y="1418.5" font-size="22" fill="#666666" textLength="125" lengthAdjust="spacing">dominik1001</text>
<text x="249.6" y="1449.0" font-size="22" fill="#666666" textLength="173.3" lengthAdjust="spacing">dependabot[bot]</text>
<text x="61.9" y="1479.5" font-size="22" fill="#666666" textLength="361" lengthAdjust="spacing">arnaud.lachaume@maestrano.com</text>
<rect x="565" y="1245" width="48" height="24" fill="#afcbf8"/>
<rect x="941" y="1275" width="48" height="26" fill="#afcbf8"/>
<rect x="565" y="1307" width="48" height="24" fill="#afcbf8"/>
<rect x="565" y="1337" width="48" height="24" fill="#afcbf8"/>
<rect x="941" y="1367" width="48" height="26" fill="#a0b9e8"/>
<rect x="1049" y="1367" width="46" height="26" fill="#afcbf8"/>
<rect x="1101" y="1367" width="48" height="26" fill="#222566"/>
<rect x="565" y="1399" width="48" height="24" fill="#afcbf8"/>
<rect x="511" y="1429" width="48" height="24" fill="#afcbf8"/>
<rect x="565" y="1429" width="48" height="24" fill="#afcbf8"/>
<rect x="941" y="1429" width="48" height="24" fill="#afcbf8"/>
<rect x="1101" y="1429" width="48" height="24" fill="#afcbf8"/>
<rect x="1155" y="1429" width="48" height="24" fill="#afcbf8"/>
<rect x="1049" y="1459" width="46" height="24" fill="#afcbf8"/>
<rect x="457" y="1489" width="48" height="24" fill="#afcbf8"/>
<rect x="619" y="1489" width="46" height="24" fill="#8ca4d6"/>
<rect x="671" y="1489" width="48" height="24" fill="#98b1e2"/>
<rect x="725" y="1489" width="48" height="24" fill="#8aa0d5"/>
<rect x="779" y="1489" width="48" height="24" fill="#90a8dc"/>
<rect x="833" y="1489" width="48" height="24" fill="#7a8fc6"/>
<rect x="887" y="1489" width="48" height="24" fill="#8ca3d7"/>
<rect x="941" y="1489" width="48" height="24" fill="#afcbf8"/>
<rect x="995" y="1489" width="48" height="24" fill="#465687"/>
<rect x="1049" y="1489" width="46" height="24" fill="#8ca3d7"/>
<rect x="1101" y="1489" width="48" height="24" fill="#414a7d"/>
<rect x="1155" y="1489" width="48" height="24" fill="#afcbf8"/>
<rect x="1209" y="1489" width="48" height="24" fill="#7d8ec0"/>
<text x="1380.1" y="1274.4" font-size="22" fill="#666666" textLength="243.5" lengthAdjust="spacing">tostart-pickagreatname</text>
<text x="1491.6" y="1320.5" font-size="22" fill="#666666" textLength="132" lengthAdjust="spacing">tomazernour</text>
<text x="1573.6" y="1366.6" font-size="22" fill="#666666" textLength="50" lengthAdjust="spacing">tmak</text>
<text x="1585.6" y="1412.7" font-size="22" fill="#666666" textLength="38" lengthAdjust="spacing">lagr</text>
<text x="1546.1" y="1458.8" font-size="22" fill="#666666" textLength="77.5" lengthAdjust="spacing">jbailleul</text>
<text x="1498.6" y="1504.9" font-size="22" fill="#666666" textLength="125" lengthAdjust="spacing">dominik1001</text>
<rect x="2211" y="1244.7" width="179.7" height="39.6" fill="#c0eddb"/>
<rect x="2211" y="1290.8" width="179.7" height="39.6" fill="#c0eddb"/>
<rect x="2211" y="1337.0" width="179.7" height="39.6" fill="#c0eddb"/>
<rect x="2211" y="1383.1" width="179.7" height="39.6" fill="#c0eddb"/>
<rect x="2211" y="1429.3" width="179.7" height="39.6" fill="#c0eddb"/>
<rect x="2211" y="1475.4" width="179.7" height="39.6" fill="#c0eddb"/>
<rect x="2211" y="1521.5" width="179.7" height="39.6" fill="#c0eddb"/>
<rect x="1657" y="1429.3" width="177.6" height="39.6" fill="#b5e5d5"/>
<rect x="1841.2" y="1429.3" width="179.3" height="39.6" fill="#c0eddb"/>
<rect x="2027" y="1429.3" width="178.0" height="39.6" fill="#b5e5d5"/>
<rect x="2396.8" y="1429.3" width="177.8" height="39.6" fill="#c0eddb"/>
<circle cx="2560" cy="1416" r="90" fill="url(#chatsh)"/>
<circle cx="2560" cy="1414" r="48" fill="#03054b"/>
<path d="M2543.5,1390 h33 a4.5,4.5 0 0 1 4.5,4.5 v43.4 l-12.6,-5 h-24.9 a4.5,4.5 0 0 1 -4.5,-4.5 v-33.9 a4.5,4.5 0 0 1 4.5,-4.5z" fill="#fff"/>
<path d="M2545.5,1420.8 q14.7,8.6 29.6,0" fill="none" stroke="#03054b" stroke-width="2.4" stroke-linecap="round"/>
</svg></body></html>
